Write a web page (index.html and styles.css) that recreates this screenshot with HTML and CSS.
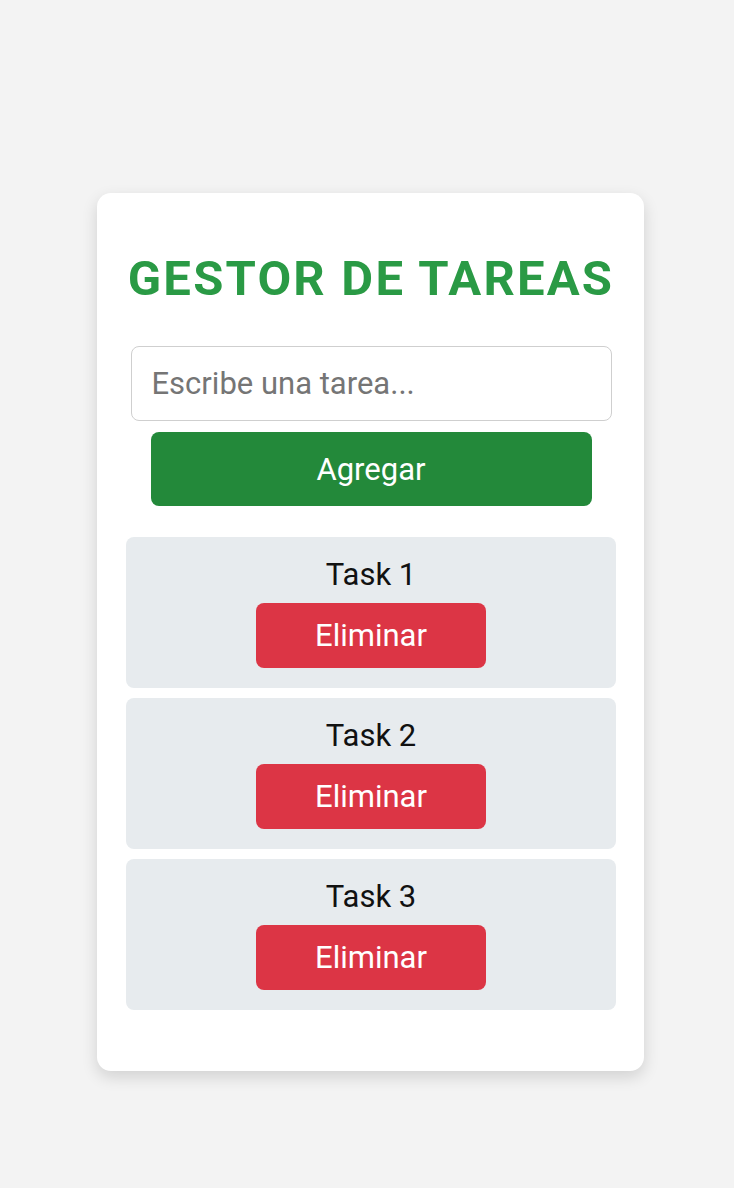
FILE: index.html
```html
<!DOCTYPE html>
<html lang="es">
<head>
<meta charset="utf-8">
<title>Gestor de Tareas</title>
<link rel="stylesheet" href="styles.css">
</head>
<body>
  <main class="card">
    <h1 class="title">GESTOR DE TAREAS</h1>
    <input class="task-input" type="text" placeholder="Escribe una tarea...">
    <button class="btn-add">Agregar</button>
    <ul class="task-list">
      <li class="task">
        <span class="task-name">Task 1</span>
        <button class="btn-delete">Eliminar</button>
      </li>
      <li class="task">
        <span class="task-name">Task 2</span>
        <button class="btn-delete">Eliminar</button>
      </li>
      <li class="task">
        <span class="task-name">Task 3</span>
        <button class="btn-delete">Eliminar</button>
      </li>
    </ul>
  </main>
</body>
</html>
```
FILE: styles.css
```css
* { box-sizing: border-box; }

html, body {
  margin: 0;
  padding: 0;
  background: #f3f3f3;
  font-family: Roboto, "Liberation Sans", sans-serif;
}

body {
  min-height: 1188px;
  padding: 193px 0 0 97px;
}

.card {
  width: 547px;
  background: #ffffff;
  border-radius: 14px;
  box-shadow: 0 6px 16px rgba(0, 0, 0, 0.14);
  padding: 57px 28px 61px 29px;
  display: flex;
  flex-direction: column;
  align-items: center;
}

.title {
  margin: 0 0 38px;
  font-size: 49px;
  font-weight: 700;
  line-height: 58px;
  letter-spacing: 2.2px;
  white-space: nowrap;
  color: #2a9a45;
  text-align: center;
}

.task-input {
  width: 481px;
  height: 75px;
  border: 1.5px solid #cfcfcf;
  border-radius: 8px;
  padding: 0 20px;
  font-family: inherit;
  font-size: 31px;
  color: #222;
  outline: none;
}

.task-input::placeholder {
  color: #757575;
}

.btn-add {
  margin-top: 11px;
  width: 441px;
  height: 74px;
  border: none;
  border-radius: 8px;
  background: #23893a;
  color: #ffffff;
  font-family: inherit;
  font-size: 31px;
}

.task-list {
  list-style: none;
  margin: 31px 0 0;
  padding: 0;
  width: 490px;
  display: flex;
  flex-direction: column;
  gap: 10px;
}

.task {
  height: 151px;
  background: #e7ebee;
  border-radius: 8px;
  padding: 20px 0;
  display: flex;
  flex-direction: column;
  align-items: center;
  gap: 10px;
}

.task-name {
  font-size: 31px;
  line-height: 36px;
  color: #111;
}

.btn-delete {
  width: 230px;
  height: 66px;
  border: none;
  border-radius: 8px;
  background: #dc3545;
  color: #ffffff;
  font-family: inherit;
  font-size: 31px;
}
```
